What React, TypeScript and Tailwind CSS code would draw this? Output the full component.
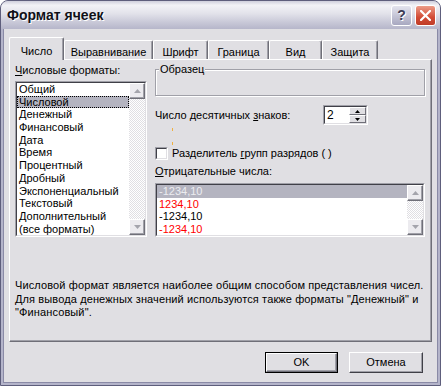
import React from 'react'

const font = "font-['Liberation_Sans',Arial,sans-serif]"

function Arrow({ dir, color }: { dir: 'up' | 'down'; color: string }) {
  return (
    <svg width="7" height="4" viewBox="0 0 7 4">
      <path d={dir === 'up' ? 'M3.5 0 L7 4 L0 4 Z' : 'M0 0 L7 0 L3.5 4 Z'} fill={color} />
    </svg>
  )
}

function ScrollBtn({ dir }: { dir: 'up' | 'down' }) {
  return (
    <div className="h-[16px] flex items-center justify-center bg-[#ecebef] border border-white border-r-[#6f6f78] border-b-[#6f6f78] shadow-[inset_-1px_-1px_0_#a0a0a8]">
      <Arrow dir={dir} color="#a4a4ac" />
    </div>
  )
}

function ScrollBar() {
  return (
    <div className="w-[16px] shrink-0 flex flex-col justify-between bg-[repeating-conic-gradient(#ffffff_0_25%,#e0dfe3_0_50%)] bg-[length:2px_2px]">
      <ScrollBtn dir="up" />
      <ScrollBtn dir="down" />
    </div>
  )
}

function Sunken({ className, children }: { className: string; children: React.ReactNode }) {
  return (
    <div className={`border border-[#a0a0a8] border-r-white border-b-white ${className}`}>
      <div className="h-full border border-[#404048] border-r-[#e0dfe3] border-b-[#e0dfe3] bg-white flex overflow-hidden">
        {children}
      </div>
    </div>
  )
}

const formats = [
  'Общий',
  'Числовой',
  'Денежный',
  'Финансовый',
  'Дата',
  'Время',
  'Процентный',
  'Дробный',
  'Экспоненциальный',
  'Текстовый',
  'Дополнительный',
  '(все форматы)',
]

const tabs = [
  { label: 'Число', w: 'w-[55px]' },
  { label: 'Выравнивание', w: 'w-[89px]' },
  { label: 'Шрифт', w: 'w-[55px]' },
  { label: 'Граница', w: 'w-[61px]' },
  { label: 'Вид', w: 'w-[53px]' },
  { label: 'Защита', w: 'w-[56px]' },
]

function SpinBtn({ dir }: { dir: 'up' | 'down' }) {
  return (
    <div className="h-[8px] flex items-center justify-center bg-[#e0dfe3] border border-white border-r-[#6f6f78] border-b-[#6f6f78]">
      <svg width="5" height="3" viewBox="0 0 5 3">
        <path d={dir === 'up' ? 'M2.5 0 L5 3 L0 3 Z' : 'M0 0 L5 0 L2.5 3 Z'} fill="#000" />
      </svg>
    </div>
  )
}

export default function App() {
  return (
    <div className={`w-[441px] h-[386px] flex flex-col rounded-t-[8px] overflow-hidden border border-[#5e5e7c] bg-[#b4b4ca] text-[11px] text-black ${font}`}>
      {/* title bar */}
      <div className="h-[28px] shrink-0 flex items-center justify-between pl-[6px] pr-[4px] bg-[linear-gradient(to_bottom,#cfcfdc_0%,#f2f2f6_15%,#e2e2ea_45%,#c9c9d8_75%,#b6b6ca_100%)]">
        <span className="text-[14px] font-bold text-[#101018] [text-shadow:1px_1px_0_#ffffff]">Формат ячеек</span>
        <div className="flex gap-[3px] pt-[1px]">
          <div className="w-[21px] h-[21px] rounded-[3px] border border-white bg-[linear-gradient(to_bottom,#e4e4ee,#a8a8c0)] flex items-center justify-center text-[14px] font-bold text-[#3c3c54] [text-shadow:1px_1px_0_#ffffff]">
            ?
          </div>
          <div className="w-[21px] h-[21px] rounded-[3px] border border-white bg-[linear-gradient(to_bottom,#ec9c88,#d24a34_60%,#c03c28)] flex items-center justify-center">
            <svg width="11" height="11" viewBox="0 0 11 11">
              <path d="M1 1 L10 10 M10 1 L1 10" stroke="#ffffff" strokeWidth="2.2" strokeLinecap="square" />
            </svg>
          </div>
        </div>
      </div>

      {/* body */}
      <div className="flex-1 mx-[2px] mb-[2px] border border-t-0 border-[#8a8aa6] bg-[#e0dfe3] flex flex-col">
        <div className="pl-[5px] pt-[8px] pr-[5px]">
          <div className="h-[22px] flex items-end">
            {tabs.map((t, i) =>
              i === 0 ? (
                <div
                  key={t.label}
                  className={`${t.w} self-start h-[23px] relative z-10 bg-[#e0dfe3] rounded-t-[2px] border-t border-l border-white border-r border-r-[#6f6f78] shadow-[inset_-1px_0_0_#a0a0a8] flex items-start justify-center pt-[5px]`}
                >
                  {t.label}
                </div>
              ) : (
                <div
                  key={t.label}
                  className={`${t.w} h-[19px] rounded-t-[2px] border-t border-l border-white border-r border-r-[#6f6f78] shadow-[inset_-1px_0_0_#a0a0a8] flex items-start justify-center pt-[3px]`}
                >
                  {t.label}
                </div>
              )
            )}
          </div>

          {/* panel */}
          <div className="h-[283px] border border-white border-r-[#6f6f78] border-b-[#6f6f78] shadow-[inset_-1px_-1px_0_#a0a0a8] pl-[5px] pr-[5px] pt-[4px] flex flex-col">
            <div className="flex gap-[8px]">
              {/* left column */}
              <div className="w-[132px] flex flex-col">
                <div className="h-[13px] leading-[13px]">
                  <span className="underline">Ч</span>исловые форматы:
                </div>
                <Sunken className="mt-[4px] h-[156px]">
                  <div className="flex-1 flex flex-col">
                    {formats.map((f, i) => (
                      <div
                        key={f}
                        className={
                          i === 1
                            ? 'h-[12.7px] shrink-0 leading-[12.7px] pl-[2px] bg-[#b4b4c0] outline-1 outline-dotted outline-black -outline-offset-1'
                            : 'h-[12.7px] shrink-0 leading-[12.7px] pl-[2px]'
                        }
                      >
                        {f}
                      </div>
                    ))}
                  </div>
                  <ScrollBar />
                </Sunken>
              </div>

              {/* right column */}
              <div className="w-[270px] flex flex-col">
                <div className="mt-[5px] h-[27px] relative border border-[#a0a0a8] shadow-[1px_1px_0_#ffffff,inset_1px_1px_0_#ffffff]">
                  <span className="absolute -top-[7px] left-[3px] px-[1px] bg-[#e0dfe3] leading-[13px]">Образец</span>
                </div>
                <div className="mt-[9px] h-[20px] flex items-center">
                  <div className="w-[168px]">
                    Число десятичных <span className="underline">з</span>наков:
                  </div>
                  <Sunken className="w-[45px] h-[20px]">
                    <span className="flex-1 pl-[2px] leading-[16px] text-[12px]">2</span>
                    <div className="w-[17px] flex flex-col">
                      <SpinBtn dir="up" />
                      <SpinBtn dir="down" />
                    </div>
                  </Sunken>
                </div>
                <div className="h-[22px] pl-[17px] flex flex-col">
                  <span className="mt-[3px] w-px h-[3px] bg-[#f0b040]" />
                  <span className="mt-[11px] w-px h-[3px] bg-[#f0b040]" />
                </div>
                <div className="h-[13px] flex items-center gap-[4px]">
                  <Sunken className="w-[13px] h-[13px] shrink-0">
                    <span />
                  </Sunken>
                  <span className="leading-[13px]">
                    Разделитель <span className="underline">г</span>рупп разрядов ( )
                  </span>
                </div>
                <div className="mt-[5px] h-[13px] leading-[13px]">
                  <span className="underline">О</span>трицательные числа:
                </div>
                <Sunken className="mt-[5px] h-[54px]">
                  <div className="flex-1 flex flex-col">
                    <div className="h-[12.7px] shrink-0 leading-[12.7px] pl-[2px] bg-[#b4b4c0] text-[#ececf0]">-1234,10</div>
                    <div className="h-[12.7px] shrink-0 leading-[12.7px] pl-[2px] text-[#ff0000]">1234,10</div>
                    <div className="h-[12.7px] shrink-0 leading-[12.7px] pl-[2px]">-1234,10</div>
                    <div className="h-[12.7px] shrink-0 leading-[12.7px] pl-[2px] text-[#ff0000]">-1234,10</div>
                  </div>
                  <ScrollBar />
                </Sunken>
              </div>
            </div>

            <p className="mt-[42px] leading-[13.5px] whitespace-nowrap tracking-[0.12px]">
              Числовой формат является наиболее общим способом представления чисел.
              <br />
              Для вывода денежных значений используются также форматы "Денежный" и
              <br />
              "Финансовый".
            </p>
          </div>
        </div>

        {/* buttons */}
        <div className="mt-[10px] flex justify-end gap-[11px] pr-[14px]">
          <button className="w-[73px] h-[21px] border border-black bg-[#e0dfe3]">
            <div className="h-full border border-white border-r-[#6f6f78] border-b-[#6f6f78] shadow-[inset_-1px_-1px_0_#a0a0a8] flex items-center justify-center">
              OK
            </div>
          </button>
          <button className="w-[74px] h-[21px] border border-white border-r-[#404048] border-b-[#404048] shadow-[inset_-1px_-1px_0_#a0a0a8] bg-[#e0dfe3] flex items-center justify-center">
            Отмена
          </button>
        </div>
      </div>
    </div>
  )
}
